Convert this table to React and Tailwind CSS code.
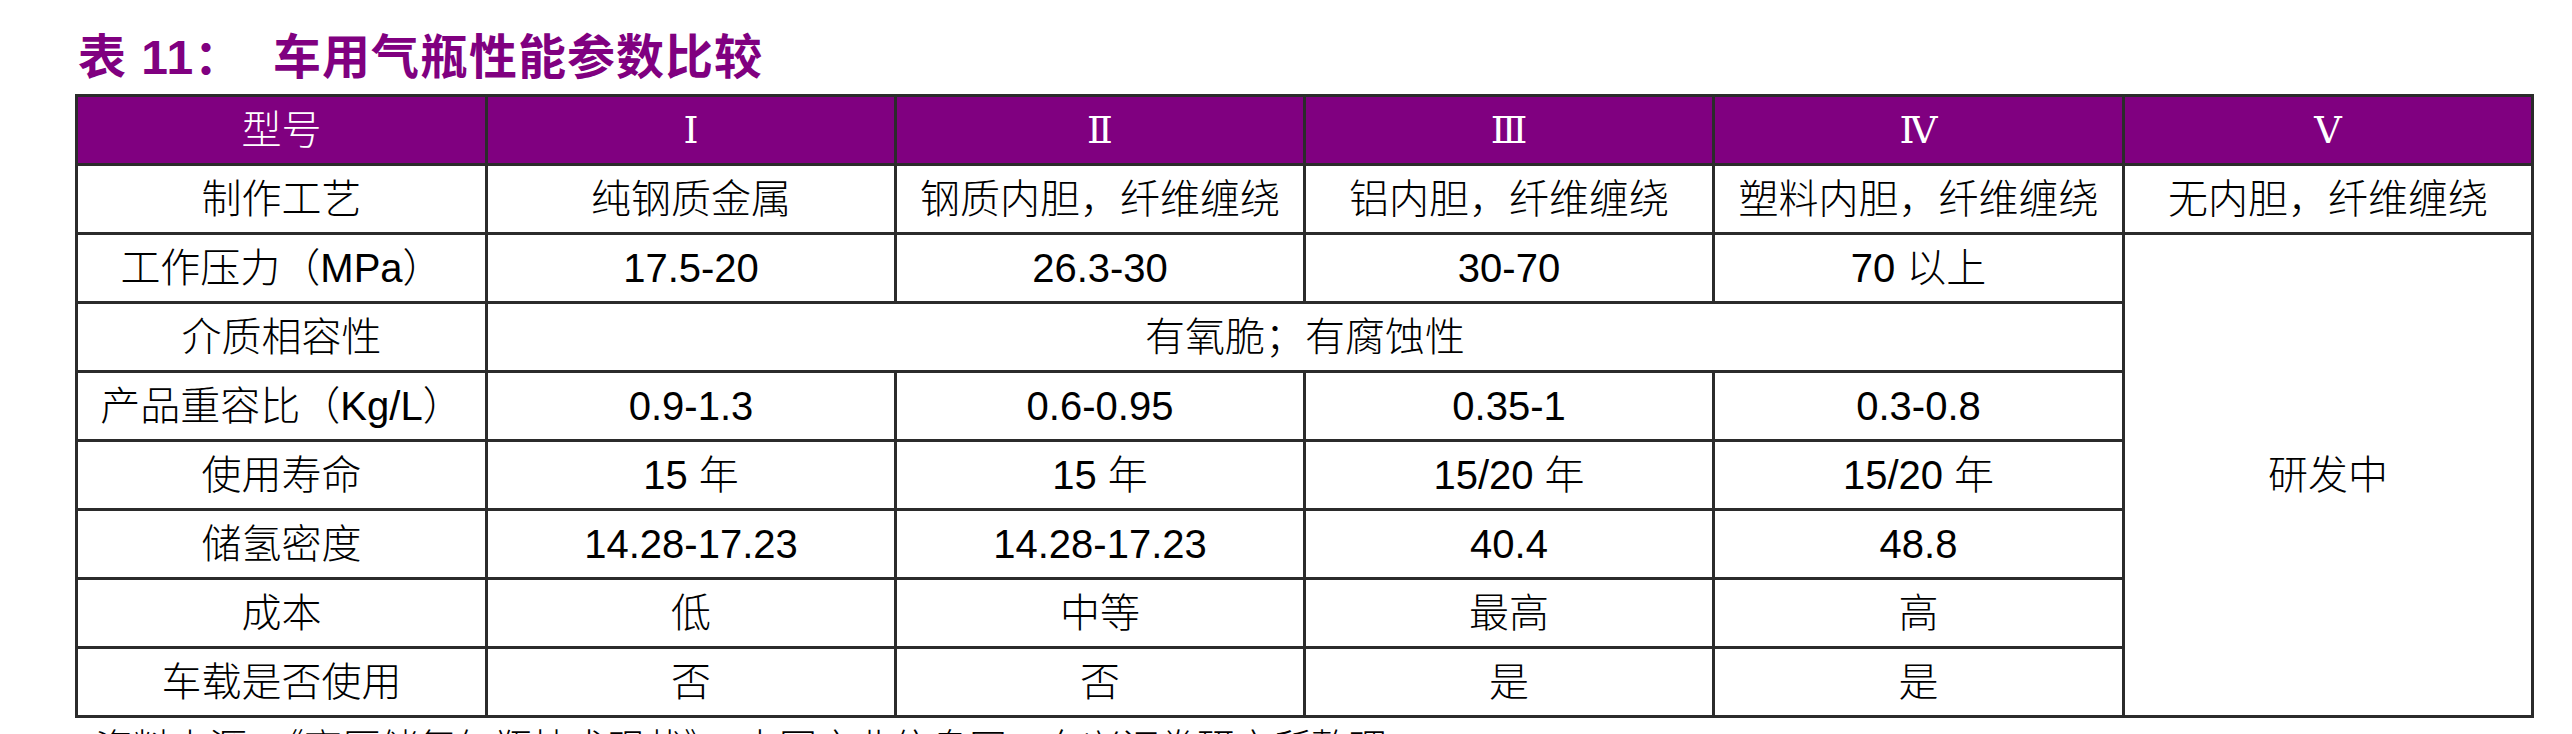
export default function App() {
  const rows = [
    ["制作工艺", "纯钢质金属", "钢质内胆，纤维缠绕", "铝内胆，纤维缠绕", "塑料内胆，纤维缠绕", "无内胆，纤维缠绕"],
  ];
  const cell =
    "border-[3px] border-[#2b2b2b] text-center align-middle p-0 whitespace-nowrap";
  const dataRows = [
    ["产品重容比（Kg/L）", "0.9-1.3", "0.6-0.95", "0.35-1", "0.3-0.8"],
    ["使用寿命", "15 年", "15 年", "15/20 年", "15/20 年"],
    ["储氢密度", "14.28-17.23", "14.28-17.23", "40.4", "48.8"],
    ["成本", "低", "中等", "最高", "高"],
    ["车载是否使用", "否", "否", "是", "是"],
  ];
  return (
    <div className="w-[2572px] h-[734px] overflow-hidden bg-white pl-[75px] pt-[34px] font-[family-name:'Liberation_Sans','Noto_Sans_CJK_SC',sans-serif] text-black">
      <div className="h-[48px] pl-[3px] text-[48px] leading-none font-bold text-[#800080] tracking-[1px] whitespace-nowrap">
        <span>表 11：</span>
        <span className="ml-[30px]">车用气瓶性能参数比较</span>
      </div>
      <table className="mt-[12px] w-[2456px] table-fixed border-collapse text-[40px] leading-none font-light">
        <colgroup>
          <col className="w-[410px]" />
          <col className="w-[409px]" />
          <col className="w-[409px]" />
          <col className="w-[409px]" />
          <col className="w-[410px]" />
          <col className="w-[409px]" />
        </colgroup>
        <tbody>
          <tr className="h-[69px] bg-[#800080] text-white">
            <td className={cell}>型号</td>
            {["Ⅰ", "Ⅱ", "Ⅲ", "Ⅳ", "Ⅴ"].map((r) => (
              <td key={r} className={cell + " font-[family-name:'DejaVu_Serif','Noto_Sans_CJK_SC',serif] text-[38px]"}>
                {r}
              </td>
            ))}
          </tr>
          {rows.map((r, i) => (
            <tr key={i} className="h-[69px]">
              {r.map((c, j) => (
                <td key={j} className={cell}>{c}</td>
              ))}
            </tr>
          ))}
          <tr className="h-[69px]">
            <td className={cell}>工作压力（MPa）</td>
            <td className={cell}>17.5-20</td>
            <td className={cell}>26.3-30</td>
            <td className={cell}>30-70</td>
            <td className={cell}>70 以上</td>
            <td className={cell} rowSpan={7}>研发中</td>
          </tr>
          <tr className="h-[69px]">
            <td className={cell}>介质相容性</td>
            <td className={cell} colSpan={4}>有氧脆；有腐蚀性</td>
          </tr>
          {dataRows.map((r, i) => (
            <tr key={i} className="h-[69px]">
              {r.map((c, j) => (
                <td key={j} className={cell}>{c}</td>
              ))}
            </tr>
          ))}
        </tbody>
      </table>
      <div className="mt-[11px] pl-[20px] text-[38px] leading-none whitespace-nowrap font-light">
        资料来源：《高压储氢气瓶技术现状》、中国产业信息网、东兴证券研究所整理
      </div>
    </div>
  );
}
